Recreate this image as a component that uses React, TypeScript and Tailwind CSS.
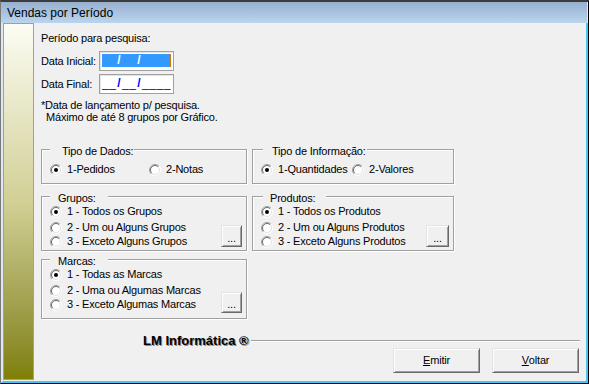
import React from 'react'

function Radio({ checked }: { checked?: boolean }) {
  return (
    <svg width="12" height="12" viewBox="0 0 12 12" className="flex-none">
      <circle cx="6" cy="6" r="5" fill="#fff" />
      <path d="M9.9 2.1 A5.5 5.5 0 0 0 2.1 9.9" fill="none" stroke="#a0a0a0" />
      <path d="M9.9 2.1 A5.5 5.5 0 0 1 2.1 9.9" fill="none" stroke="#fff" />
      <path d="M9.2 2.8 A4.5 4.5 0 0 0 2.8 9.2" fill="none" stroke="#696969" />
      <path d="M9.2 2.8 A4.5 4.5 0 0 1 2.8 9.2" fill="none" stroke="#e3e3e3" />
      {checked && <circle cx="6" cy="6" r="2" fill="#000" />}
    </svg>
  )
}

function Option({ label, checked, className = '' }: { label: string; checked?: boolean; className?: string }) {
  return (
    <div className={`flex items-center gap-[5px] h-[13px] leading-[13px] whitespace-nowrap ${className}`}>
      <Radio checked={checked} />
      <span>{label}</span>
    </div>
  )
}

function GroupBox({
  title,
  capClass,
  className,
  children,
}: {
  title: string
  capClass: string
  className: string
  children: React.ReactNode
}) {
  return (
    <div className={`relative border border-[#a0a0a0] shadow-[inset_1px_1px_0_#fff,1px_1px_0_#fff] ${className}`}>
      <span className={`absolute top-[-5px] leading-[13px] bg-[#f0f0f0] whitespace-nowrap ${capClass}`}>{title}</span>
      {children}
    </div>
  )
}

function DotsButton({ className }: { className: string }) {
  return (
    <button
      className={`flex-none flex items-end justify-center pb-[3px] leading-[10px] bg-[#f0f0f0] border border-t-[#e3e3e3] border-l-[#e3e3e3] border-r-[#696969] border-b-[#696969] shadow-[inset_1px_1px_0_#fff,inset_-1px_-1px_0_#a0a0a0] ${className}`}
    >
      ...
    </button>
  )
}

function WinButton({ children }: { children: React.ReactNode }) {
  return (
    <button className="w-[87px] h-[25px] flex items-center justify-center bg-[#f0f0f0] border border-t-[#e3e3e3] border-l-[#e3e3e3] border-r-[#696969] border-b-[#696969] shadow-[inset_1px_1px_0_#fff,inset_-1px_-1px_0_#a0a0a0]">
      {children}
    </button>
  )
}

// campo de data com mascara
function DateField({ selected }: { selected?: boolean }) {
  const under = selected ? 'text-[#3399ff]' : 'text-[#0000ff]'
  const slash = selected ? 'text-white' : 'text-[#0000ff]'
  return (
    <div className="w-[75px] h-[20px] border border-[#a0a0a0] bg-white p-[2px] shadow-[inset_1px_1px_0_#e3e3e3]">
      <div
        className={`h-[13px] flex items-center text-[12px] leading-[13px] tracking-normal overflow-hidden ${selected ? 'bg-[#3399ff]' : ''}`}
      >
        <span className={`${under} inline-block w-[14px] tracking-[0.6px]`}>__</span>
        <span className={`${slash} inline-block w-[6px] text-center font-bold`}>/</span>
        <span className={`${under} inline-block w-[14px] tracking-[0.6px]`}>__</span>
        <span className={`${slash} inline-block w-[6px] text-center font-bold`}>/</span>
        <span className={`${under} inline-block w-[28px] tracking-[0.6px]`}>____</span>
        {selected && <span className="ml-auto w-[1px] h-[13px] bg-[#d07010]" />}
      </div>
    </div>
  )
}

export default function App() {
  return (
    <div className="w-[589px] h-[384px] flex flex-col bg-[#f0f0f0] border-t-2 border-t-[#3c3c3c] border-l border-l-[#7a7a7a] border-r border-r-black border-b border-b-black font-['Liberation_Sans',Arial,sans-serif] text-[11px] tracking-[-0.2px] text-black overflow-hidden">
      {/* Barra de titulo */}
      <div className="h-[21px] flex-none flex items-center pl-[6px] pt-[1px] text-[12px] tracking-normal bg-gradient-to-b from-[#96b0cf] to-[#bbd5ef] border-r border-r-[#dfeaf5]">
        Vendas por Período
      </div>

      <div className="flex flex-1 min-h-0 border-l-2 border-l-[#dce8f4] border-r-2 border-r-[#4cc3ee] border-b-2 border-b-[#4cc3ee]">
        {/* faixa lateral */}
        <div className="w-[31px] mb-[1px] flex-none border border-[#a0a0a0] bg-gradient-to-b from-[#fcfcf4] via-[#d2d095] to-[#7f7f00]" />

        <div className="flex-1 flex flex-col pl-[7px] pt-[8px]">
          <div className="h-[14px] leading-[14px]">Período para pesquisa:</div>

          <div className="mt-[6px] flex items-center h-[20px]">
            <span className="w-[58px]">Data Inicial:</span>
            <DateField selected />
          </div>
          <div className="mt-[3px] flex items-center h-[20px]">
            <span className="w-[58px]">Data Final:</span>
            <DateField />
          </div>

          <div className="mt-[5px] leading-[12px]">
            <div>*Data de lançamento p/ pesquisa.</div>
            <div className="pl-[5px]">Máximo de até 8 grupos por Gráfico.</div>
          </div>

          <div className="mt-[26px] flex gap-[5px]">
            <GroupBox title="Tipo de Dados:" capClass="left-[8px] pl-[12px] pr-[1px]" className="w-[206px] h-[35px] pt-[13px] pl-[8px]">
              <div className="flex">
                <Option label="1-Pedidos" checked className="w-[99px]" />
                <Option label="2-Notas" />
              </div>
            </GroupBox>
            <GroupBox title="Tipo de Informação:" capClass="left-[10px] pl-[9px] pr-[1px]" className="w-[202px] h-[35px] pt-[13px] pl-[8px]">
              <div className="flex">
                <Option label="1-Quantidades" checked className="w-[91px]" />
                <Option label="2-Valores" />
              </div>
            </GroupBox>
          </div>

          <div className="mt-[12px] flex gap-[5px]">
            <GroupBox title="Grupos:" capClass="left-[8px] pl-[8px] pr-[12px]" className="w-[206px] h-[55px] flex items-start">
              <div className="flex-1 pt-[8px] pl-[8px]">
                <Option label="1 - Todos os Grupos" checked />
                <Option label="2 - Um ou Alguns Grupos" className="mt-[3px]" />
                <Option label="3 - Exceto Alguns Grupos" className="mt-[1px]" />
              </div>
              <DotsButton className="w-[21px] h-[22px] mt-[28px] mr-[4px]" />
            </GroupBox>
            <GroupBox title="Produtos:" capClass="left-[10px] pl-[7px] pr-[11px]" className="w-[202px] h-[55px] flex items-start">
              <div className="flex-1 pt-[8px] pl-[8px]">
                <Option label="1 - Todos os Produtos" checked />
                <Option label="2 - Um ou Alguns Produtos" className="mt-[3px]" />
                <Option label="3 - Exceto Alguns Produtos" className="mt-[1px]" />
              </div>
              <DotsButton className="w-[23px] h-[22px] mt-[28px] mr-[4px]" />
            </GroupBox>
          </div>

          <div className="mt-[8px] flex">
            <GroupBox title="Marcas:" capClass="left-[8px] pl-[8px] pr-[12px]" className="w-[206px] h-[60px] flex items-start">
              <div className="flex-1 pt-[8px] pl-[8px]">
                <Option label="1 - Todas as Marcas" checked />
                <Option label="2 - Uma ou Algumas Marcas" className="mt-[3px]" />
                <Option label="3 - Exceto Algumas Marcas" className="mt-[1px]" />
              </div>
              <DotsButton className="w-[21px] h-[21px] mt-[32px] mr-[4px]" />
            </GroupBox>
          </div>

          <div className="mt-[15px] h-[14px] flex items-center pl-[102px] pr-[6px]">
            <span className="text-[13px] leading-[14px] font-bold tracking-normal [text-shadow:1px_1px_0_#8a8a8a] whitespace-nowrap">
              LM Informática ®
            </span>
            <div className="flex-1 ml-[2px] h-[2px] border-t border-t-[#a0a0a0] border-b border-b-white" />
          </div>

          <div className="flex justify-end gap-[12px] pr-[7px]">
            <WinButton>
              <u>E</u>mitir
            </WinButton>
            <WinButton>
              <u>V</u>oltar
            </WinButton>
          </div>
        </div>
      </div>
    </div>
  )
}
